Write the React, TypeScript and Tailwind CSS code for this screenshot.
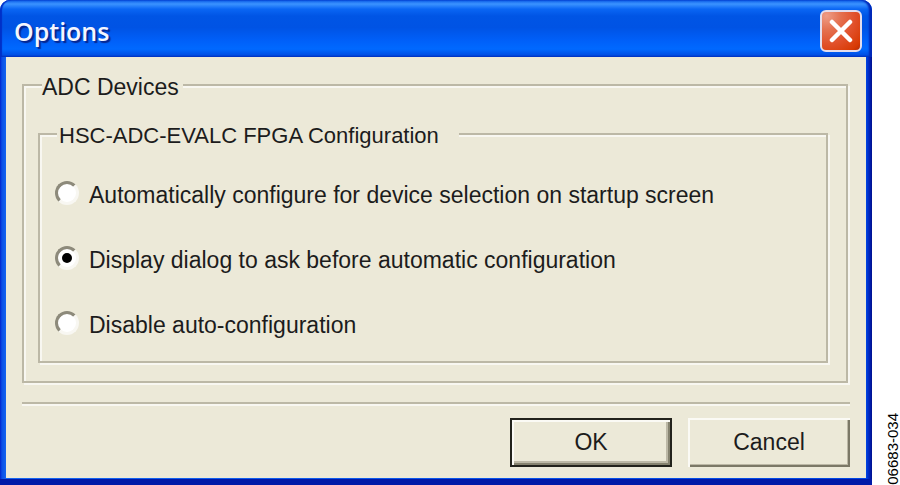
import { useState } from 'react';
import type { ReactNode } from 'react';

const modes = [
  { id: 'auto', label: 'Automatically configure for device selection on startup screen' },
  { id: 'ask', label: 'Display dialog to ask before automatic configuration' },
  { id: 'off', label: 'Disable auto-configuration' },
];

const etched =
  'min-w-0 border-2 border-[#bcb8a6] shadow-[2px_2px_0_#f8f7f1,inset_2px_2px_0_#f8f7f1]';

const ModeOption = ({ checked, onChange, children }: { checked: boolean; onChange: () => void; children: ReactNode }) => (
  <label className="flex items-center gap-[10px] leading-7">
    <input
      type="radio"
      name="fpga-mode"
      checked={checked}
      onChange={onChange}
      className="mb-1 grid size-6 shrink-0 appearance-none place-items-center rounded-full border-3 border-t-[#8d8a7b] border-r-[#f8f7f2] border-b-[#f8f7f2] border-l-[#8d8a7b] bg-white before:size-[10px] before:rounded-full checked:before:bg-black"
    />
    {children}
  </label>
);

const TitleBar = () => (
  <header className="flex h-[57px] items-center justify-between rounded-t-[10px] bg-[linear-gradient(180deg,#0a5ce8_0%,#3b93ff_7%,#0a66f4_16%,#0055e5_28%,#0053e4_48%,#005ff8_70%,#0069ff_86%,#0050e6_96%,#0038c4_100%)] pt-1 pr-[10px] pl-[14px] shadow-[inset_2px_0_1px_#0030c8,inset_-3px_0_2px_#0028b8]">
    <h1 className="font-['Open_Sans',sans-serif] text-[25px] leading-8 font-semibold text-[#f4f6ff] [text-shadow:2px_2px_1px_#06268f]">
      Options
    </h1>
    <button
      type="button"
      aria-label="Close"
      className="grid size-[42px] place-items-center rounded-[6px] border-2 border-[#e4ddec] bg-[radial-gradient(circle_at_12%_10%,#ee9c86_0%,#e4704f_30%,#e1502a_60%,#d83a04_88%,#b42c08_100%)]"
    >
      <svg viewBox="0 0 24 24" className="size-6" stroke="#fff" strokeWidth="4.5" strokeLinecap="round">
        <path d="M3 3 21 21M21 3 3 21" />
      </svg>
    </button>
  </header>
);

const App = () => {
  const [mode, setMode] = useState('ask');

  return (
    <div className="flex bg-white font-['Liberation_Sans',Arial,sans-serif] text-[23px] text-[#1c1c1c]">
      <main className="min-w-0 flex-1 rounded-t-[10px] bg-[#0036d0]">
        <TitleBar />
        <div className="border-b-[6px] border-b-[#0019a8] bg-[linear-gradient(90deg,#0022cc_0px,#0a4fe6_2px,#1464f0_6px,#0046e4_calc(100%-6px),#0026c0_calc(100%-3px),#00108c_100%)] px-[6px] pb-px">
          <form className="bg-[#ece9d8] pt-[14px] pr-4 pb-[11px] pl-4" onSubmit={(e) => e.preventDefault()}>
            <fieldset className={`${etched} mr-[2px] pt-[21px] pr-[18px] pb-[18px] pl-[14px]`}>
              <legend className="ml-1 bg-[#ece9d8] pt-1 pr-1 leading-6">ADC Devices</legend>
              <fieldset className={`${etched} space-y-[37px] pt-[33px] pr-4 pb-[22px] pl-[15px]`}>
                <legend className="mb-0 ml-[2px] bg-[#ece9d8] pt-1 pr-5 pl-[2px] text-[22px] leading-6">HSC-ADC-EVALC FPGA Configuration</legend>
                {modes.map((m) => (
                  <ModeOption key={m.id} checked={mode === m.id} onChange={() => setMode(m.id)}>
                    {m.label}
                  </ModeOption>
                ))}
              </fieldset>
            </fieldset>
            <hr className="mt-[19px] h-1 border-t-2 border-b-2 border-t-[#bcb8a6] border-b-[#f8f7f1]" />
            <div className="mt-3 flex justify-end gap-4">
              <button
                type="submit"
                className="h-[49px] w-[162px] border-2 border-[#22221c] shadow-[inset_2px_2px_0_#fbfaf5,inset_-2px_-2px_0_#85826f,inset_-4px_-4px_0_#bcb8a6]"
              >
                OK
              </button>
              <button
                type="button"
                className="h-[49px] w-[162px] shadow-[inset_2px_2px_0_#fbfaf5,inset_-2px_-2px_0_#7b7867,inset_-3px_-3px_0_#bcb8a6]"
              >
                Cancel
              </button>
            </div>
          </form>
        </div>
      </main>
      <aside className="flex w-7 shrink-0 items-end justify-end">
        <p className="rotate-180 text-[15px] leading-[14px] text-black [writing-mode:vertical-rl]">06683-034</p>
      </aside>
    </div>
  );
};

export default App;
